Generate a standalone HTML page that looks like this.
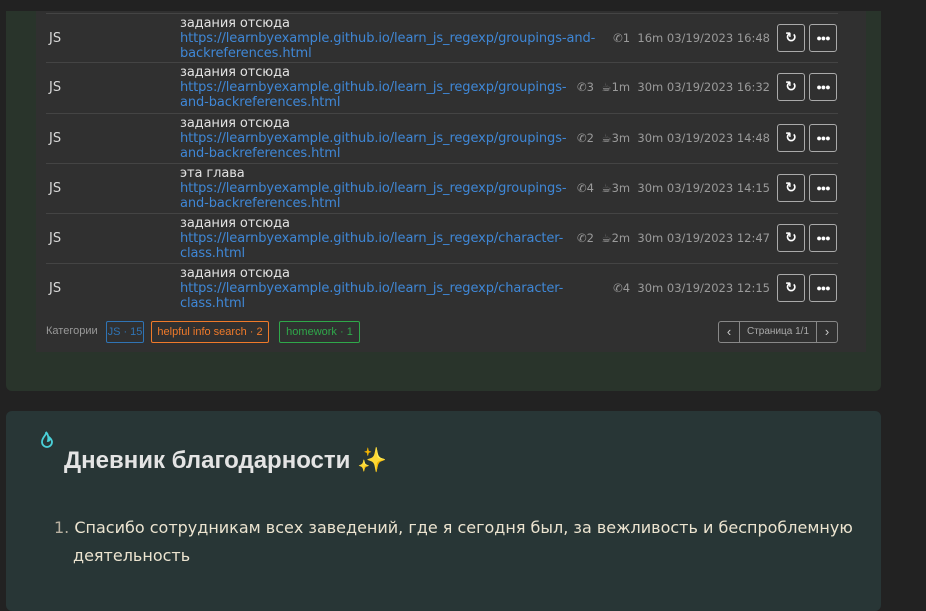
<!DOCTYPE html>
<html><head><meta charset="utf-8"><style>
*{margin:0;padding:0;box-sizing:border-box}
body{width:926px;height:605px;background:#222222;font-family:"DejaVu Sans","Liberation Sans",sans-serif;position:relative;overflow:hidden}
.card1{position:absolute;left:6px;top:11px;width:875px;height:380px;background:#29342b;border-radius:0 0 6px 6px}
.panel{position:absolute;left:36px;top:11px;width:830px;height:341px;background:#303030}
.row{position:absolute;left:46px;width:792px;height:50px;border-top:1px solid #444}
.js{position:absolute;left:3px;top:17px;color:#d8d8d8;font-size:13px}
.txt{position:absolute;left:134px;top:2px;font-size:13px;line-height:15px;color:#e2e2e2;width:385px;letter-spacing:-0.1px}
.txt a{color:#3f87d6;text-decoration:none}
.meta{position:absolute;right:68px;top:17px;font-size:11.5px;color:#9a9a9a;white-space:nowrap}
.btn{position:absolute;top:10px;width:28px;height:28px;border:1px solid #aaa;border-radius:3px;color:#fff;font-size:14px;font-weight:bold;text-align:center;line-height:26px}
.dots{font-size:9px;letter-spacing:-1px;font-family:"Liberation Sans",sans-serif}
.tag{position:absolute;top:321px;height:22px;border:1px solid;border-radius:2px;font-family:"Liberation Sans",sans-serif;font-size:11px;line-height:20px;text-align:center;white-space:nowrap}
.card2{position:absolute;left:6px;top:411px;width:875px;height:200px;background:#283636;border-radius:6px}
</style></head><body>
<div class="card1"></div>
<div class="panel"></div>

<div class="row" style="top:13px"><span class="js">JS</span><div class="txt" style="width:425px">задания отсюда<br><a>https://learnbyexample.github.io/learn_js_regexp/groupings-and-backreferences.html</a></div><span class="meta">✆1 &nbsp;16m 03/19/2023 16:48</span><div class="btn" style="left:731px">↻</div><div class="btn dots" style="left:763px">●●●</div></div>
<div class="row" style="top:62px"><span class="js">JS</span><div class="txt">задания отсюда<br><a>https://learnbyexample.github.io/learn_js_regexp/groupings-and-backreferences.html</a></div><span class="meta">✆3 &nbsp;☕1m &nbsp;30m 03/19/2023 16:32</span><div class="btn" style="left:731px">↻</div><div class="btn dots" style="left:763px">●●●</div></div>
<div class="row" style="top:113px"><span class="js">JS</span><div class="txt">задания отсюда<br><a>https://learnbyexample.github.io/learn_js_regexp/groupings-and-backreferences.html</a></div><span class="meta">✆2 &nbsp;☕3m &nbsp;30m 03/19/2023 14:48</span><div class="btn" style="left:731px">↻</div><div class="btn dots" style="left:763px">●●●</div></div>
<div class="row" style="top:163px"><span class="js">JS</span><div class="txt">эта глава<br><a>https://learnbyexample.github.io/learn_js_regexp/groupings-and-backreferences.html</a></div><span class="meta">✆4 &nbsp;☕3m &nbsp;30m 03/19/2023 14:15</span><div class="btn" style="left:731px">↻</div><div class="btn dots" style="left:763px">●●●</div></div>
<div class="row" style="top:213px"><span class="js">JS</span><div class="txt">задания отсюда<br><a>https://learnbyexample.github.io/learn_js_regexp/character-class.html</a></div><span class="meta">✆2 &nbsp;☕2m &nbsp;30m 03/19/2023 12:47</span><div class="btn" style="left:731px">↻</div><div class="btn dots" style="left:763px">●●●</div></div>
<div class="row" style="top:263px"><span class="js">JS</span><div class="txt">задания отсюда<br><a>https://learnbyexample.github.io/learn_js_regexp/character-class.html</a></div><span class="meta">✆4 &nbsp;30m 03/19/2023 12:15</span><div class="btn" style="left:731px">↻</div><div class="btn dots" style="left:763px">●●●</div></div>

<span style="position:absolute;left:46px;top:325px;font-family:'Liberation Sans',sans-serif;font-size:11px;color:#999">Категории</span>
<span class="tag" style="left:106px;width:38px;color:#2f74b5;border-color:#2f74b5">JS · 15</span>
<span class="tag" style="left:151px;width:118px;color:#f07a2a;border-color:#f07a2a">helpful info search · 2</span>
<span class="tag" style="left:279px;width:81px;color:#2fa84a;border-color:#2fa84a">homework · 1</span>
<div style="position:absolute;left:718px;top:321px;width:120px;height:22px;border:1px solid #888;border-radius:3px;font-family:'Liberation Sans',sans-serif;font-size:10px;color:#aaa;line-height:20px">
<span style="position:absolute;left:0;width:21px;text-align:center;border-right:1px solid #888;height:20px;font-size:13px;color:#ccc">‹</span>
<span style="position:absolute;left:28px">Страница 1/1</span>
<span style="position:absolute;right:0;width:21px;text-align:center;border-left:1px solid #888;height:20px;font-size:13px;color:#ccc">›</span></div>

<div class="card2"></div>
<svg style="position:absolute;left:38px;top:430px" width="18" height="20" viewBox="0 0 18 20"><path d="M8 2c1 3-4 5-4 10a5 5 0 0 0 10 0c0-2-1-3-2-4 0 2-1 3-2 3 1-3 0-7-2-9z" fill="none" stroke="#4ad0d8" stroke-width="1.8"/></svg>
<div style="position:absolute;left:64px;top:446px;font-family:'Liberation Sans',sans-serif;font-size:24px;font-weight:bold;color:#e4e4e4">Дневник благодарности <span style="color:#f5e23a">✨</span></div>
<div style="position:absolute;left:54px;top:514px;font-size:16px;line-height:28px;color:#ece4d0;width:830px;white-space:nowrap"><span style="color:#b8b0a0">1.</span> Спасибо сотрудникам всех заведений, где я сегодня был, за вежливость и беспроблемную<br><span style="padding-left:19px">деятельность</span></div>
</body></html>
